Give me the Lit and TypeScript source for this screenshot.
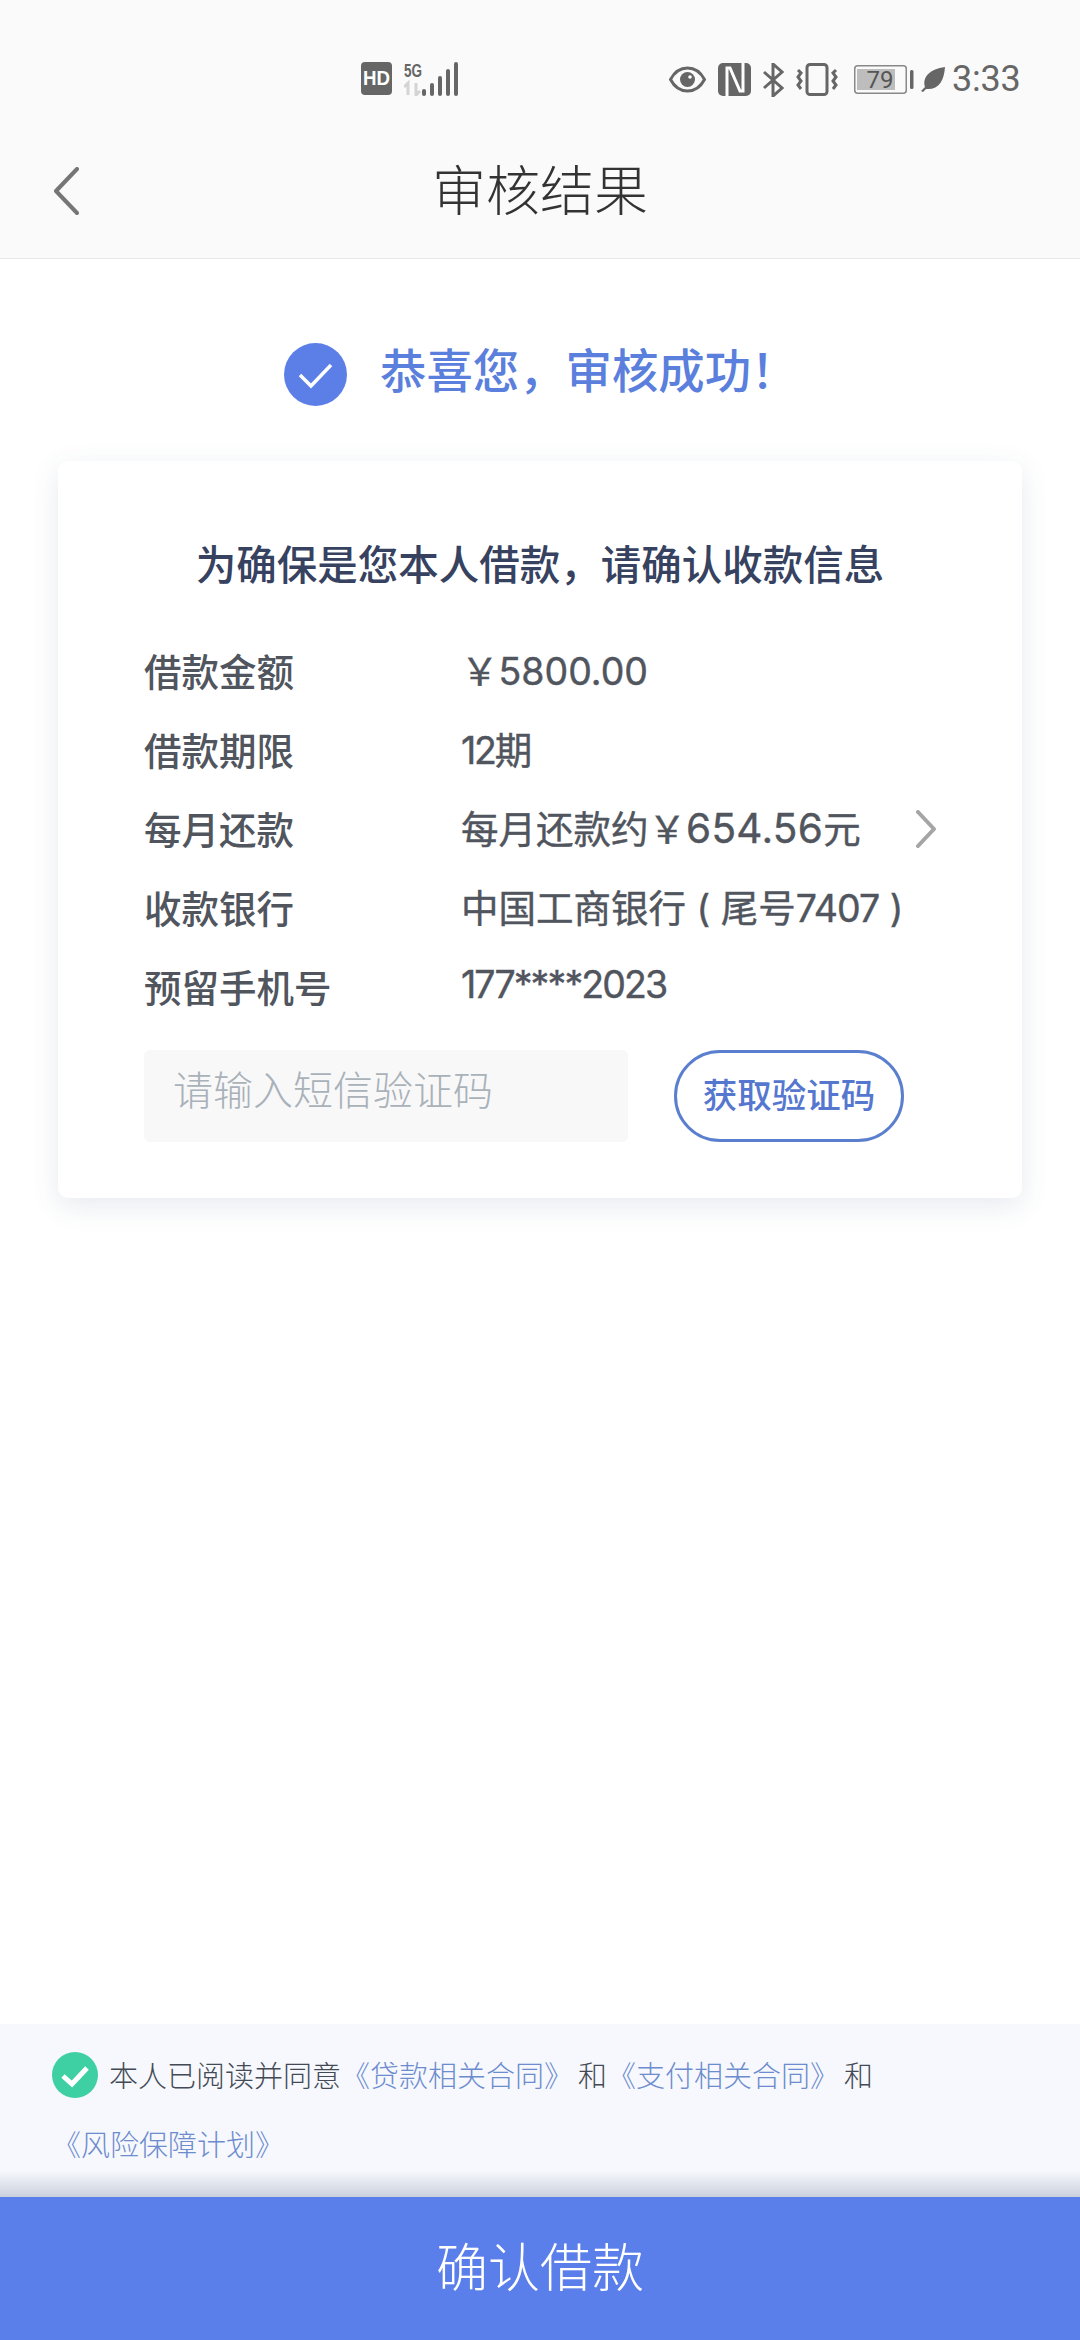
import { LitElement, html, css, svg } from "lit";
import { customElement } from "lit/decorators.js";

const chevron = (d: string) => svg`<path d=${d} fill="none" stroke="currentColor" stroke-width="4" stroke-linecap="round" stroke-linejoin="round"/>`;

@customElement("app-root")
export class AppRoot extends LitElement {
  static styles = css`
    :host { display: block; width: 1080px; height: 2340px; background: #fff; font-family: "Inter", "Noto Sans CJK SC", sans-serif; overflow: hidden; }
    .page { height: 2340px; display: flex; flex-direction: column; }
    .top { height: 258px; background: #fafafa; border-bottom: 1px solid #e8e8e8; display: flex; flex-direction: column; flex: none; }
    .status { height: 130px; position: relative; flex: none; display: flex; align-items: flex-start; }
    .status svg { display: block; flex: none; }
    .left-ic { display: flex; margin: 62px 0 0 361px; gap: 12px; }
    .net { margin-top: -6px; }
    .right-ic { display: flex; margin: 62px 0 0 211px; align-items: center; height: 35px; }
    .time { font: 400 36px/35px "Roboto", sans-serif; color: #666; margin-left: 7px; letter-spacing: -.2px; }
    .nav { flex: 1; display: flex; align-items: flex-start; position: relative; }
    .back { margin: 37px 0 0 53px; color: #767676; flex: none; }
    .nav-title { position: absolute; left: 0; right: 0; top: 32px; text-align: center; font-size: 54px; line-height: 60px; font-weight: 300; color: #333; }
    .hero { display: flex; align-items: center; margin: 84px 0 0 284px; height: 63px; }
    .hero-text { font-size: 46.4px; font-weight: 500; color: #5b7fdc; margin: 0 0 8px 33px; line-height: 56px; white-space: nowrap; }
    .card { margin: 55px 58px 0; height: 737px; box-sizing: border-box; background: #fff; border-radius: 10px; box-shadow: 0 8px 28px rgba(60,80,120,.12); padding: 73px 86px 0; flex: none; }
    .card-title { font-size: 40.5px; font-weight: 500; color: #36425f; line-height: 64px; text-align: center; margin: 0 -30px; height: 64px; white-space: nowrap; }
    .rows { margin-top: 32px; display: flex; flex-direction: column; }
    .row { height: 79px; display: flex; align-items: center; color: #50555e; font-size: 37.5px; font-weight: 500; position: relative; white-space: nowrap; }
    .label { width: 317px; flex: none; }
    .val { margin-bottom: 2px; font-weight: 400; -webkit-text-stroke: .4px #50555e; }
    .amt { font-size: 40.5px; letter-spacing: .3px; }
    .tight { letter-spacing: -1.9px; }
    .narrow { letter-spacing: -1px; }
    .term { letter-spacing: -2.2px; }
    .more { position: absolute; left: 771px; top: 22px; color: #a5a5a5; }
    .form { display: flex; margin-top: 25px; height: 92px; }
    .input { width: 484px; box-sizing: border-box; background: #f8f8f8; border-radius: 6px; padding-left: 29px; color: #a9b1b9; font-size: 40px; line-height: 82px; font-weight: 300; }
    .btn { margin-left: 46px; width: 230px; box-sizing: border-box; border: 3px solid #5b7fcf; border-radius: 46px; text-align: center; color: #5577cf; font-size: 34.5px; font-weight: 500; line-height: 86px; }
    .spacer { flex: 1; }
    .agree { height: 173px; box-sizing: border-box; background: #f6f8fd; padding: 27px 0 0 52px; flex: none; position: relative; font-size: 29px; color: #444a55; font-weight: 300; }
    .agree::after { content: ""; position: absolute; left: 0; right: 0; bottom: 0; height: 26px; background: linear-gradient(rgba(150,160,180,0), rgba(150,160,180,.45)); }
    .line { display: flex; align-items: center; height: 46px; white-space: nowrap; }
    .line2 { margin-top: 23px; }
    .line svg { margin: 2px 11px 0 0; flex: none; }
    .link { color: #6d8ccd; }
    .gap1 { margin-left: 5px; }
    .gap2 { margin-left: 5px; }
    .confirm { height: 143px; padding-bottom: 8px; box-sizing: border-box; background: #5b7fea; color: #fff; font-size: 52px; font-weight: 300; display: flex; align-items: center; justify-content: center; flex: none; }
  `;

  private statusLeft() {
    return html`
      <div class="left-ic">
        <svg width="31" height="33" viewBox="0 0 31 33"><rect width="31" height="33" rx="4" fill="#666"/><text x="15.500" y="23" text-anchor="middle" font-family="Liberation Sans" font-weight="700" font-size="20" textLength="27" lengthAdjust="spacingAndGlyphs" fill="#fff">HD</text></svg>
        <svg class="net" width="54" height="40" viewBox="0 -6 54 40">
          <text x="0" y="15" font-family="Liberation Sans" font-weight="700" font-size="19" fill="#666" textLength="18" lengthAdjust="spacingAndGlyphs">5G</text>
          <path d="M4 33V21L0 25M12 21v12l4-4" stroke="#d4d4d4" stroke-width="3" fill="none"/>
          <rect x="18" y="27" width="4" height="7" rx="2" fill="#666"/>
          <rect x="26" y="21" width="4" height="13" rx="2" fill="#666"/>
          <rect x="34" y="14" width="4" height="20" rx="2" fill="#666"/>
          <rect x="42" y="7" width="4" height="27" rx="2" fill="#666"/>
          <rect x="50" y="0" width="4" height="34" rx="2" fill="#666"/>
        </svg>
      </div>`;
  }

  private statusRight() {
    return html`
      <div class="right-ic">
        <svg width="37" height="27" viewBox="0 0 37 27"><path d="M1.500 13.500C6 5 12 2 18.500 2S31 5 35.500 13.500C31 22 25 25 18.500 25S6 22 1.500 13.500Z" fill="none" stroke="#666" stroke-width="3"/><circle cx="18.500" cy="13.500" r="7.500" fill="#666"/><circle cx="21" cy="11" r="1.800" fill="#fff"/></svg>
        <svg style="margin-left:12px" width="33" height="33" viewBox="0 0 33 33"><rect width="33" height="33" rx="5" fill="#666"/><path d="M9 33V5h3l10 23h3V0" fill="none" stroke="#fff" stroke-width="3"/></svg>
        <svg style="margin-left:11px" width="22" height="34" viewBox="0 0 22 34"><path d="M2 9l18 16-9 8V1l9 8L2 25" fill="none" stroke="#666" stroke-width="3"/></svg>
        <svg style="margin-left:12px" width="42" height="33" viewBox="0 0 42 33"><rect x="11" y="1.500" width="20" height="30" rx="3" fill="none" stroke="#666" stroke-width="3"/><path d="M2 7l3 3-3 4 3 4-3 4 3 4M40 7l-3 3 3 4-3 4 3 4-3 4" fill="none" stroke="#666" stroke-width="3"/></svg>
        <svg style="margin-left:16px" width="60" height="29" viewBox="0 0 60 29">
          <rect x=".75" y=".75" width="51.500" height="27.500" rx="3" fill="none" stroke="#888" stroke-width="1.500"/>
          <rect x="3" y="4" width="38" height="21" fill="#bdbdbd"/>
          <text x="26" y="23" text-anchor="middle" font-family="Roboto" font-size="24" fill="#555">79</text>
          <rect x="56" y="5" width="3.500" height="19" rx="1.500" fill="#666"/>
        </svg>
        <svg style="margin-left:6px" width="25" height="25" viewBox="0 0 25 25"><path d="M25 0C24 14 19 23 6 22L3 25 1 24l4-4C2 10 10 2 25 0Z" fill="#666"/></svg>
        <span class="time">3:33</span>
      </div>`;
  }

  render() {
    return html`
      <div class="page">
        <div class="top">
          <div class="status">${this.statusLeft()}${this.statusRight()}</div>
          <div class="nav">
            <svg class="back" width="26" height="48" viewBox="0 0 26 48">${chevron("M24 2 3 24l21 22")}</svg>
            <div class="nav-title">审核结果</div>
          </div>
        </div>
        <div class="hero">
          <svg width="63" height="63" viewBox="0 0 63 63"><circle cx="31.500" cy="31.500" r="31.500" fill="#5b7fe6"/><path d="M16 32l11 11 20-21" fill="none" stroke="#fff" stroke-width="3.500"/></svg>
          <div class="hero-text">恭喜您，审核成功！</div>
        </div>
        <div class="card">
          <div class="card-title">为确保是您本人借款，请确认收款信息</div>
          <div class="rows">
            <div class="row"><div class="label">借款金额</div><div class="val">￥5800.00</div></div>
            <div class="row"><div class="label">借款期限</div><div class="val"><span class="term">12</span>期</div></div>
            <div class="row"><div class="label">每月还款</div><div class="val">每月还款约￥<span class="amt">654.56</span>元</div>
              <svg class="more" width="22" height="38" viewBox="0 0 22 38">${chevron("M3 2l16 17L3 36")}</svg></div>
            <div class="row"><div class="label">收款银行</div><div class="val">中国工商银行 ( 尾号<span class="narrow">7407</span> )</div></div>
            <div class="row"><div class="label">预留手机号</div><div class="val"><span class="tight">177****2023</span></div></div>
          </div>
          <div class="form">
            <div class="input">请输入短信验证码</div>
            <div class="btn">获取验证码</div>
          </div>
        </div>
        <div class="spacer"></div>
        <div class="agree">
          <div class="line">
            <svg width="46" height="46" viewBox="0 0 46 46"><circle cx="23" cy="23" r="23" fill="#3ecfa3"/><path d="M11 24l9 8 15-16" fill="none" stroke="#fff" stroke-width="5"/></svg>
            <span>本人已阅读并同意</span><span class="link">《贷款相关合同》</span><span class="gap1">和</span><span class="link">《支付相关合同》</span><span class="gap2">和</span>
          </div>
          <div class="line line2"><span class="link">《风险保障计划》</span></div>
        </div>
        <div class="confirm">确认借款</div>
      </div>`;
  }
}
